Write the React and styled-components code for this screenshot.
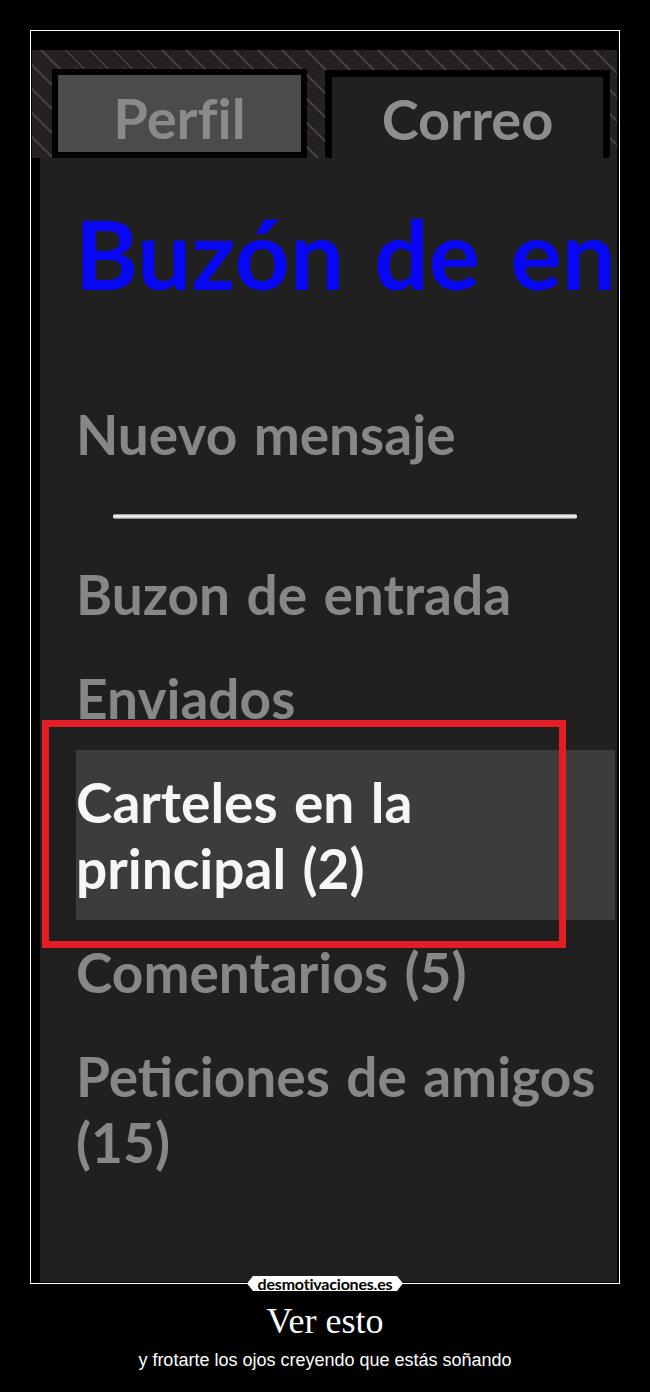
import React from "react";
import styled, { createGlobalStyle } from "styled-components";

const GlobalStyle = createGlobalStyle`
  html, body {
    margin: 0;
    padding: 0;
    background: #000;
  }
  body {
    width: 650px;
    min-height: 1392px;
    overflow: hidden;
    font-variant-ligatures: none;
  }
`;

const Poster = styled.div`
  width: 650px;
  height: 1392px;
  box-sizing: border-box;
  padding-top: 30px;
  background: #000;
  display: flex;
  flex-direction: column;
  align-items: center;
`;

const Frame = styled.div`
  position: relative;
  width: 590px;
  height: 1254px;
  box-sizing: border-box;
  border: 1px solid #fff;
  padding: 1px 2px 1px 1px;
  display: flex;
  flex-direction: column;
`;

const Screen = styled.div`
  flex: 1;
  display: flex;
  flex-direction: column;
  padding-top: 18px;
  background: #000;
  overflow: hidden;
`;

const TabStrip = styled.div`
  flex: none;
  height: 108px;
  box-sizing: border-box;
  padding-left: 20px;
  display: flex;
  align-items: flex-end;
  gap: 18px;
  background-color: #252122;
  background-image: repeating-linear-gradient(
    45deg,
    transparent 0 14px,
    rgba(110, 100, 102, 0.45) 14px 16px,
    transparent 16px 17px
  );
`;

const Tab = styled.div`
  box-sizing: border-box;
  display: flex;
  align-items: center;
  justify-content: center;
  font: 700 56px/66px Lato, "Open Sans", sans-serif;
  font-variant-ligatures: none;
  color: ${(p) => (p.$current ? "#8d8d8d" : "#8a8a8a")};
  width: ${(p) => (p.$current ? "285px" : "255px")};
  height: ${(p) => (p.$current ? "88px" : "89px")};
  background: ${(p) => (p.$current ? "#202020" : "#4b4b4b")};
  border: ${(p) => (p.$current ? "7px" : "6px")} solid #000;
  border-bottom-width: ${(p) => (p.$current ? "0" : "6px")};
  padding-top: ${(p) => (p.$current ? "2px" : "9px")};
  border-radius: ${(p) => (p.$current ? "0 0 3px 3px" : "0")};
`;

const Body = styled.div`
  flex: 1;
  position: relative;
  background: #202020;
  border-left: 8px solid #000;
  padding: 0 2px 0 36px;
  overflow: hidden;
`;

const Title = styled.h1`
  margin: 47px 0 0 -1px;
  font: 700 96px/96px Lato, "Open Sans", sans-serif;
  color: #0808f6;
  white-space: nowrap;
  word-spacing: 7px;
`;

const Menu = styled.nav`
  margin-top: 81px;
  display: flex;
  flex-direction: column;
`;

const Item = styled.div`
  position: relative;
  padding: 19px 0;
  font: 700 55px/66px Lato, "Open Sans", sans-serif;
  word-spacing: 3px;
  color: ${(p) => (p.$active ? "#f6f6f6" : "#878787")};
  background: ${(p) => (p.$active ? "#3c3c3c" : "transparent")};
  white-space: pre-line;
`;

const Divider = styled.div`
  width: 464px;
  height: 5px;
  margin: 28px 0 23px 37px;
  border-radius: 2px;
  background: linear-gradient(#8a8a8a, #ffffff 40%, #d6d6d6 70%, #6f6f6f);
`;

const Marker = styled.div`
  position: absolute;
  left: -34px;
  top: -30px;
  width: 524px;
  height: 228px;
  box-sizing: border-box;
  border: 7px solid #e31d26;
  pointer-events: none;
`;

const Badge = styled.div`
  position: absolute;
  left: 50%;
  bottom: -8px;
  transform: translateX(-50%);
  width: 156px;
  height: 15px;
  background: #fff;
  clip-path: polygon(6px 0, calc(100% - 6px) 0, 100% 50%, calc(100% - 6px) 100%, 6px 100%, 0 50%);
  display: flex;
  justify-content: center;
  font: 700 16px/15px Lato, "DejaVu Sans", sans-serif;
  letter-spacing: -0.2px;
  color: #000;
`;

const Caption = styled.h2`
  margin: 17px 0 0;
  font: 400 36px/40px "Liberation Serif", "Times New Roman", serif;
  color: #fff;
  text-align: center;
`;

const Subtitle = styled.p`
  margin: 10px 0 0;
  font: 400 18px/18px "Liberation Sans", Arial, sans-serif;
  color: #fff;
  text-align: center;
`;

const items = [
  { label: "Nuevo mensaje" },
  { divider: true },
  { label: "Buzon de entrada" },
  { label: "Enviados" },
  { label: "Carteles en la\nprincipal (2)", active: true },
  { label: "Comentarios (5)" },
  { label: "Peticiones de amigos\n(15)" },
];

export default function App() {
  return (
    <>
      <GlobalStyle />
      <Poster>
        <Frame>
          <Screen>
            <TabStrip>
              <Tab>Perfil</Tab>
              <Tab $current>Correo</Tab>
            </TabStrip>
            <Body>
              <Title>Buzón de entrada</Title>
              <Menu>
                {items.map((it, i) =>
                  it.divider ? (
                    <Divider key={i} />
                  ) : (
                    <Item key={i} $active={it.active}>
                      {it.label}
                      {it.active && <Marker />}
                    </Item>
                  )
                )}
              </Menu>
            </Body>
          </Screen>
          <Badge>desmotivaciones.es</Badge>
        </Frame>
        <Caption>Ver esto</Caption>
        <Subtitle>y frotarte los ojos creyendo que estás soñando</Subtitle>
      </Poster>
    </>
  );
}
